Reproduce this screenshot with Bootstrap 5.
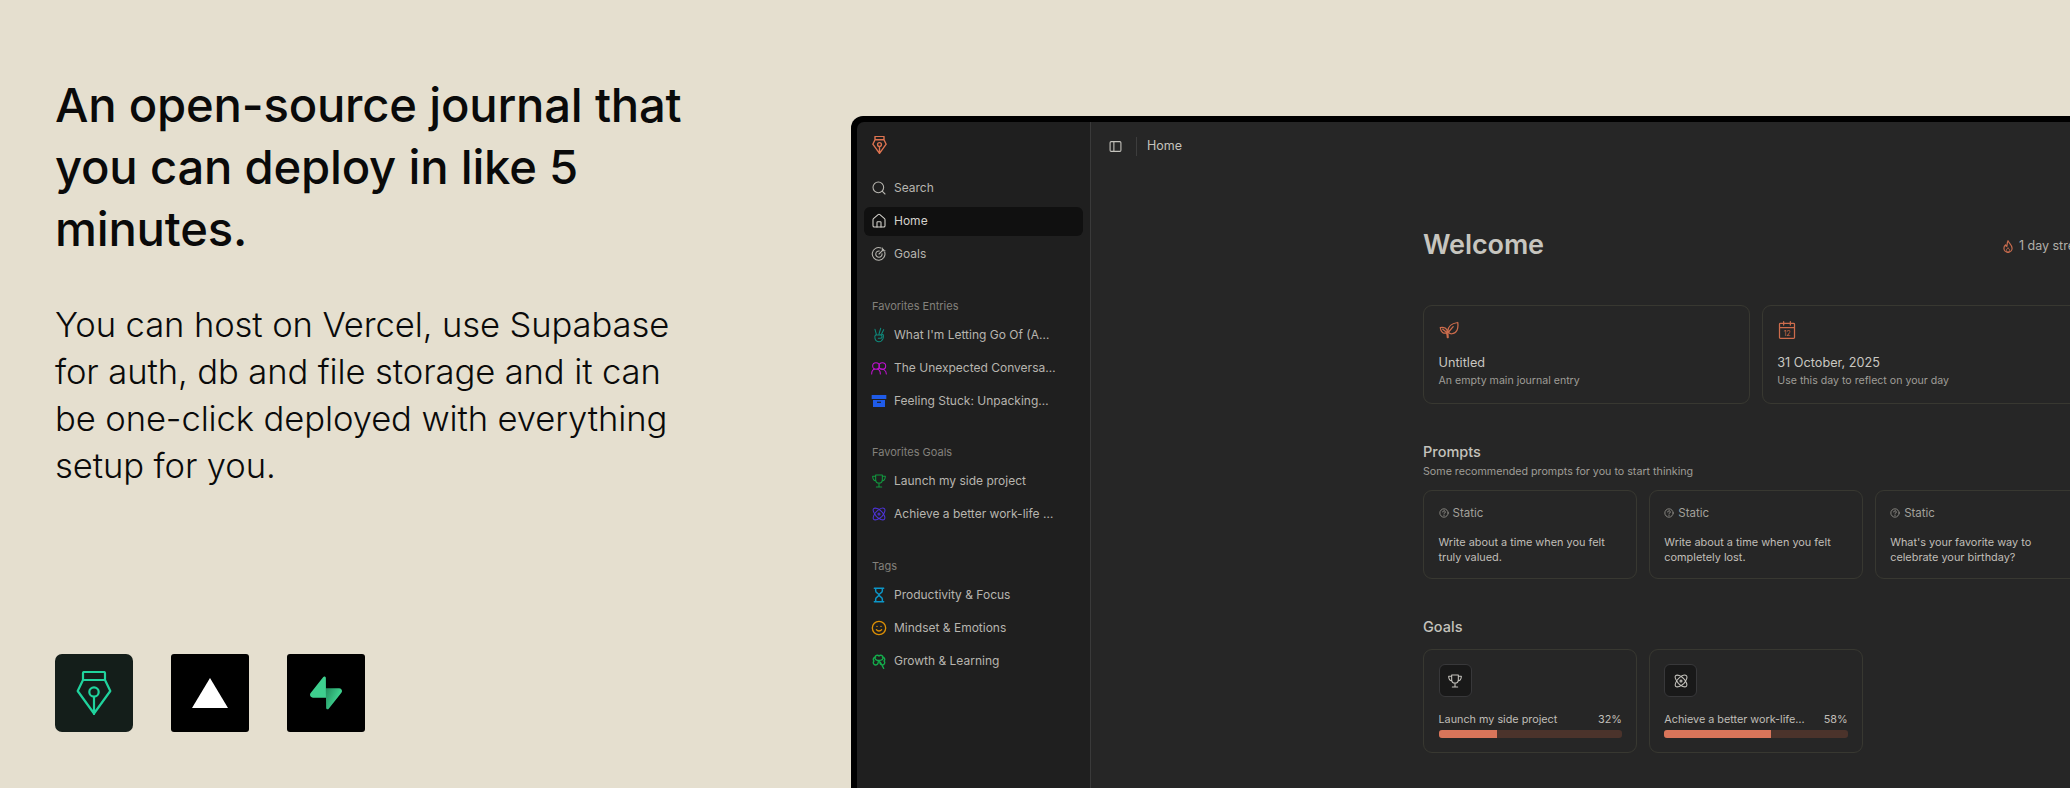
<!DOCTYPE html>
<html lang="en">
<head>
  <meta charset="UTF-8" />
  <meta name="viewport" content="width=device-width, initial-scale=1.0"/>
  <title>Open-source journal</title>
  <link href="https://cdn.jsdelivr.net/npm/bootstrap@5.3.2/dist/css/bootstrap.min.css" rel="stylesheet">
  <style>
    html, body { height: 788px; overflow: hidden; }
    body { background: #e5dfcf; font-family: Inter, "Liberation Sans", sans-serif; color: #0a0a0a; }
    .intro { width: 851px; height: 788px; padding: 74px 0 56px 55px; }
    .intro h1 { font-size: 47.2px; line-height: 62px; font-weight: 500; letter-spacing: -.2px; width: 680px; margin: 0 0 41px; }
    .intro p { font-size: 34.6px; line-height: 47px; font-weight: 300; letter-spacing: -.1px; width: 640px; margin: 0; }
    .stack-box { width: 78px; height: 78px; background: #000; border-radius: 3px; }
    .stack-box.pen-box { background: #141e1a; border-radius: 7px; }
    .stack-gap { gap: 38px; }

    .frame { width: 1400px; height: 672px; margin-top: 116px; background: #000; padding: 6px 0 0 6px; border-top-left-radius: 12px; }
    .side { width: 234px; background: #1f1f1f; border-right: 1px solid #3a3a3a; padding: 0 7px; border-top-left-radius: 7px; color: #b1afa9; font-size: 12px; }
    .side-logo { height: 51.5px; padding: 14px 0 0 8px; }
    .side-item { height: 29px; margin: 0 0 4px; padding: 0 8px; gap: 7px; border-radius: 6px; color: #b7b5af; white-space: nowrap; }
    .side-item.active-item { background: #101010; color: #d4d2cc; }
    .side-item svg { width: 16px; height: 16px; flex: none; margin-left: -1px; }
    .side-label { height: 16px; line-height: 16px; padding-left: 8px; margin: 29px 0 6.5px; font-size: 11px; color: #83817c; }
    .main-pane { background: #262626; flex: 1; }
    .topbar { height: 48px; padding-left: 18px; color: #c4c2bc; font-size: 12.5px; }
    .topbar-rule { width: 1px; height: 19px; background: #3d3d3d; margin: 0 10px 0 14px; }
    .content { width: 666px; margin-left: 332px; padding-top: 57px; color: #c4c2bc; }
    .welcome { font-size: 27px; line-height: 36px; font-weight: 600; color: #c7c5bf; margin: 0; letter-spacing: -.1px; }
    .streak { font-size: 12.5px; gap: 4px; color: #b1afa9; }
    .tile-grid { display: grid; gap: 11.5px; }
    .two-up { grid-template-columns: repeat(2, 1fr); margin-top: 42px; }
    .three-up { grid-template-columns: repeat(3, 1fr); }
    .goal-grid { margin-top: 12px; }
    .tile { background: transparent; border: 1px solid #383831; border-radius: 9px; padding: 14px 14.5px; color: #c4c2bc; }
    .tile-title { font-size: 12.7px; line-height: 18px; margin-top: 14px; color: #c9c7c1; }
    .tile-sub { font-size: 10.6px; line-height: 16px; margin-top: 1px; color: #9f9d97; }
    .sect-title { font-size: 14.5px; line-height: 20px; font-weight: 500; color: #c4c2bc; margin: 38px 0 0; }
    .sect-sub { font-size: 10.7px; line-height: 16px; color: #9f9d97; margin: 2px 0 10px; }
    .static-tag { font-size: 11.5px; line-height: 16px; gap: 4px; color: #a3a19b; }
    .prompt-text { font-size: 10.9px; line-height: 14.7px; margin-top: 14px; color: #c0beb8; height: 29.4px; }
    .goal-icon { width: 33px; height: 33px; background: #191919; border: 1px solid #38383a; border-radius: 6px; color: #c4c2bc; }
    .goal-row { font-size: 10.8px; line-height: 16px; margin-top: 15px; color: #c0beb8; }
    .goal-bar { height: 8px; margin-top: 2px; background: #4b332b; border-radius: 3px; }
    .goal-bar .progress-bar { background: #d9755a; }
    svg { display: block; }
    .ln { fill: none; stroke: currentColor; stroke-width: 1.6; stroke-linecap: round; stroke-linejoin: round; }
    .pen-ln { stroke-width: var(--pen-stroke, 2.2); }
    .side-logo { --pen-stroke: 3.4; }
  </style>
</head>
<body class="d-flex">

<svg width="0" height="0" class="position-absolute">
  <defs>
    <symbol id="i-pen" viewBox="0 0 36 44"><path class="ln pen-ln" d="M7 9V2.2Q7 1 8.2 1h19.6Q29 1 29 2.2V9zM7 9 1.700 20 18 42.500 34.300 20 29 9M18 26v17"/><circle class="ln pen-ln" cx="18" cy="21" r="4.7"/></symbol>
    <symbol id="i-trophy" viewBox="0 0 24 24"><path class="ln" d="M7 3h10v7a5 5 0 0 1-10 0zM7 5H2.500c0 4 1.500 6.500 5 7M17 5h4.500c0 4-1.500 6.500-5 7M12 15v5M8 21h8"/></symbol>
    <symbol id="i-atom" viewBox="0 0 24 24"><circle class="ln" cx="12" cy="12" r="1.500"/><path class="ln" d="M4 20C2 18 5 11 8.500 8 13 4 18 2 20 4s0 7-3.500 11.500C12 20 6 22 4 20zM20 20c-2 2-8 0-12-4.500C4.500 11 2 6 4 4s8 0 12 4.500c4 4 6 9.500 4 11.500z"/></symbol>
    <symbol id="i-q" viewBox="0 0 24 24"><circle class="ln" style="stroke-width:1.800" cx="12" cy="12" r="10"/><path class="ln" style="stroke-width:2" d="M9 9.500a3 3 0 1 1 4.500 2.600c-1 .6-1.500 1.200-1.500 2.400M12 18v.1"/></symbol>
  </defs>
</svg>

<div class="intro d-flex flex-column justify-content-between flex-shrink-0">
  <div>
    <h1>An open-source journal that you can deploy in like 5 minutes.</h1>
    <p>You can host on Vercel, use Supabase for auth, db and file storage and it can be one-click deployed with everything setup for you.</p>
  </div>
  <div class="d-flex stack-gap">
    <div class="stack-box pen-box d-flex align-items-center justify-content-center" style="color:#20d39d">
      <svg width="36" height="44"><use href="#i-pen"/></svg>
    </div>
    <div class="stack-box d-flex align-items-center justify-content-center">
      <svg width="36" height="30" viewBox="0 0 36 30"><path fill="#fff" d="M18 0 36 30H0z"/></svg>
    </div>
    <div class="stack-box d-flex align-items-center justify-content-center">
      <svg width="32" height="34" viewBox="0 0 109 113">
        <defs><linearGradient id="supa" x1="53" y1="54" x2="94" y2="72" gradientUnits="userSpaceOnUse"><stop offset="0" stop-color="#249361"/><stop offset="1" stop-color="#3ecf8e"/></linearGradient></defs>
        <path fill="url(#supa)" d="M63.7 110.3c-2.900 3.600-8.700 1.600-8.700-3L54 40h45.200c8.200 0 12.800 9.500 7.700 15.900z"/>
        <path fill="#3ecf8e" d="M45.300 2.100c2.900-3.600 8.700-1.600 8.700 3l.5 67.200H9.800c-8.200 0-12.800-9.500-7.600-15.900z"/>
      </svg>
    </div>
  </div>
</div>

<div class="frame d-flex flex-shrink-0">
  <nav class="side flex-shrink-0">
    <div class="side-logo" style="color:#dd7350"><svg width="15" height="18"><use href="#i-pen"/></svg></div>

    <div class="side-item d-flex align-items-center"><svg viewBox="0 0 24 24"><circle class="ln" cx="11" cy="11" r="8"/><path class="ln" d="m21 21-4.300-4.300"/></svg>Search</div>
    <div class="side-item active-item d-flex align-items-center"><svg viewBox="0 0 24 24"><path class="ln" d="M15 21v-7a1 1 0 0 0-1-1h-4a1 1 0 0 0-1 1v7"/><path class="ln" d="M3 10a2 2 0 0 1 .7-1.500l7-6a2 2 0 0 1 2.600 0l7 6A2 2 0 0 1 21 10v9a2 2 0 0 1-2 2H5a2 2 0 0 1-2-2z"/></svg>Home</div>
    <div class="side-item d-flex align-items-center"><svg viewBox="0 0 24 24"><path class="ln" d="M20.500 9A9.500 9.500 0 1 1 15 3"/><path class="ln" d="M16.500 11.500a4.700 4.700 0 1 1-4-4"/><path class="ln" d="m12 12 7-7M17 3v4h4"/></svg>Goals</div>

    <div class="side-label">Favorites Entries</div>
    <div class="side-item d-flex align-items-center"><svg viewBox="0 0 24 24" style="color:#0f8a7c"><path class="ln" d="M8 11 6 3.500M12 10.500 14.500 2M7 12h7a2.500 2.500 0 0 1 0 5h-3M16 10l3-6M7 12c-1.500 1-1.500 3-1 5 .7 3 3 5 6 5s5-2 6-4.500c.6-1.800.8-3.500.5-5.500-1.500-1.500-3.500-1.500-4.500 0"/></svg>What I'm Letting Go Of (A…</div>
    <div class="side-item d-flex align-items-center"><svg viewBox="0 0 24 24" style="color:#c011d1"><circle class="ln" cx="7.500" cy="9" r="5"/><circle class="ln" cx="17" cy="9" r="5"/><path class="ln" d="M1 21c0-4 2-7 5-7.500M9 13.500c3 .5 5 3.500 5 7.500M14.500 13.500c3-.5 8.500 1.500 8.500 7.500"/></svg>The Unexpected Conversa…</div>
    <div class="side-item d-flex align-items-center"><svg viewBox="0 0 24 24"><path fill="#1f5be8" d="M1 3h22v6H1zM3 10.500h18V21H3z"/><path fill="#1f1f1f" d="M9 13h6v1.800H9z"/></svg>Feeling Stuck: Unpacking…</div>

    <div class="side-label">Favorites Goals</div>
    <div class="side-item d-flex align-items-center"><svg viewBox="0 0 24 24" style="color:#12983f"><use href="#i-trophy"/></svg>Launch my side project</div>
    <div class="side-item d-flex align-items-center"><svg viewBox="0 0 24 24" style="color:#4d33d6"><use href="#i-atom"/></svg>Achieve a better work-life …</div>

    <div class="side-label">Tags</div>
    <div class="side-item d-flex align-items-center"><svg viewBox="0 0 24 24" style="color:#0c97c9"><path class="ln" style="stroke-width:2.200" d="M5 2h14M5 22h14M7 2v4c0 3 5 4 5 6s-5 3-5 6v4M17 2v4c0 3-5 4-5 6s5 3 5 6v4"/></svg>Productivity &amp; Focus</div>
    <div class="side-item d-flex align-items-center"><svg viewBox="0 0 24 24" style="color:#dc8f05"><circle class="ln" style="stroke-width:2" cx="12" cy="12" r="10"/><path class="ln" style="stroke-width:2" d="M8 14.500s1.500 2 4 2 4-2 4-2M9 9.500v.1M15 9.500v.1"/></svg>Mindset &amp; Emotions</div>
    <div class="side-item d-flex align-items-center"><svg viewBox="0 0 24 24" style="color:#14ad4c"><path class="ln" style="stroke-width:2" d="M12 11C8 11 6 10 6 7a3.500 3.500 0 0 1 6-2.500A3.500 3.500 0 0 1 18 7c0 3-2 4-6 4zM11 12c0 4-1 6-4 6a3.500 3.500 0 0 1-2.500-6A3.500 3.500 0 0 1 7 6M13 12c0 4 1 6 4 6a3.500 3.500 0 0 0 2.500-6A3.500 3.500 0 0 0 17 6M14 14l5 9"/></svg>Growth &amp; Learning</div>
  </nav>

  <div class="main-pane">
    <div class="topbar d-flex align-items-center">
      <svg width="13" height="13" viewBox="0 0 24 24"><rect class="ln" style="stroke-width:2" x="2" y="3" width="20" height="18" rx="2"/><path class="ln" style="stroke-width:2" d="M9 3v18"/></svg>
      <div class="topbar-rule"></div>
      Home
    </div>

    <div class="content">
      <div class="d-flex justify-content-between align-items-baseline">
        <h2 class="welcome">Welcome</h2>
        <div class="streak d-flex align-items-center">
          <svg width="14" height="15" viewBox="0 0 24 24" style="color:#c96c4e"><path class="ln" style="stroke-width:2" d="M12 2c1 4 7 7 7 13a7 7 0 0 1-14 0c0-3 1.500-5 3-6 0 2 1 3 2 3 1-3 0-6 2-10z"/><path class="ln" d="M12 22a3 3 0 0 1-3-3c0-2 2-3 3-5 1 2 3 3 3 5a3 3 0 0 1-3 3z"/></svg>
          1 day streak
        </div>
      </div>

      <div class="tile-grid two-up">
        <div class="card tile">
          <svg width="20" height="20" viewBox="0 0 24 24" style="color:#cd6c4c"><path class="ln" style="stroke-width:1.500" d="M11 21c0-3-.500-5-.500-7 0-6 5-10 12-11 1 7-1 13-7 13.500-2 .2-3.500-.5-4.500-2.500M11 15l6-7M10 21c0-2 0-4-1.500-5.500C6 16.500 2 15 1.500 9 6 8 10 10 10 14.500M4.500 11l5 4"/></svg>
          <div class="tile-title">Untitled</div>
          <div class="tile-sub">An empty main journal entry</div>
        </div>
        <div class="card tile">
          <svg width="20" height="20" viewBox="0 0 24 24" style="color:#cd6c4c"><path class="ln" style="stroke-width:1.500" d="M4 4h16a1 1 0 0 1 1 1v16a1 1 0 0 1-1 1H4a1 1 0 0 1-1-1V5a1 1 0 0 1 1-1zM3 9h18M8 2v4M16 2v4"/><text x="12" y="19" text-anchor="middle" font-size="8.500" fill="currentColor" font-family="Inter, sans-serif">12</text></svg>
          <div class="tile-title">31 October, 2025</div>
          <div class="tile-sub">Use this day to reflect on your day</div>
        </div>
      </div>

      <div class="sect-title">Prompts</div>
      <div class="sect-sub">Some recommended prompts for you to start thinking</div>
      <div class="tile-grid three-up">
        <div class="card tile">
          <div class="static-tag d-flex align-items-center"><svg width="10" height="10"><use href="#i-q"/></svg>Static</div>
          <div class="prompt-text">Write about a time when you felt truly valued.</div>
        </div>
        <div class="card tile">
          <div class="static-tag d-flex align-items-center"><svg width="10" height="10"><use href="#i-q"/></svg>Static</div>
          <div class="prompt-text">Write about a time when you felt completely lost.</div>
        </div>
        <div class="card tile">
          <div class="static-tag d-flex align-items-center"><svg width="10" height="10"><use href="#i-q"/></svg>Static</div>
          <div class="prompt-text">What's your favorite way to celebrate your birthday?</div>
        </div>
      </div>

      <div class="sect-title">Goals</div>
      <div class="tile-grid three-up goal-grid">
        <div class="card tile">
          <div class="goal-icon d-flex align-items-center justify-content-center"><svg width="16" height="16"><use href="#i-trophy"/></svg></div>
          <div class="goal-row d-flex justify-content-between"><span>Launch my side project</span><span>32%</span></div>
          <div class="progress goal-bar"><div class="progress-bar" style="width:32%"></div></div>
        </div>
        <div class="card tile">
          <div class="goal-icon d-flex align-items-center justify-content-center"><svg width="16" height="16"><use href="#i-atom"/></svg></div>
          <div class="goal-row d-flex justify-content-between"><span>Achieve a better work-life…</span><span>58%</span></div>
          <div class="progress goal-bar"><div class="progress-bar" style="width:58%"></div></div>
        </div>
      </div>
    </div>
  </div>
</div>

<script src="https://cdn.jsdelivr.net/npm/bootstrap@5.3.2/dist/js/bootstrap.bundle.min.js"></script>
</body>
</html>
